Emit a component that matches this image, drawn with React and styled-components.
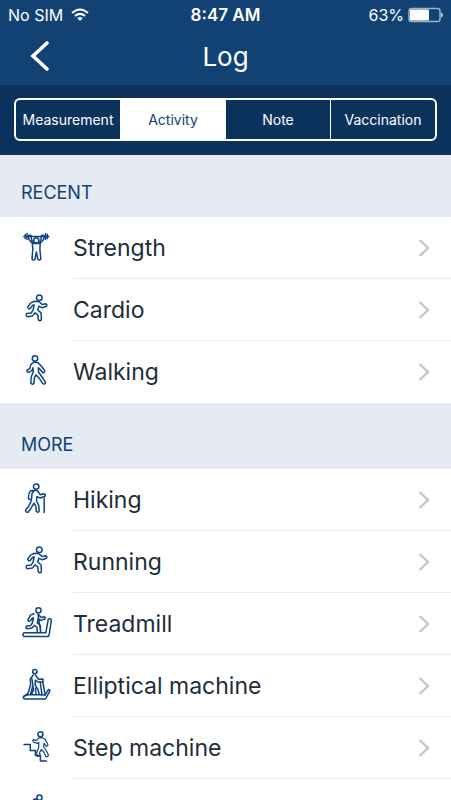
import styled, { createGlobalStyle } from "styled-components"

const GlobalStyle = createGlobalStyle`
    body {
        margin: 0;
        background-color: white;
        font-family: Inter, "Liberation Sans", sans-serif;
    }
    * {
        box-sizing: border-box;
    }
`
const Container = styled.div`
    height: 100vh;
    overflow: hidden;
    color: #1d2d3a;
`
const Header = styled.header`
    height: 85px;
    background-color: #114273;
    color: white;
`
const StatusBar = styled.div`
    display: grid;
    grid-template-columns: 1fr auto 1fr;
    align-items: center;
    height: 29px;
    padding: 0 8px;
    font-size: 16px;
`
const Status = styled.div`
    display: flex;
    align-items: center;
    justify-content: ${props => props.$end ? "flex-end" : "flex-start"};
    gap: ${props => props.$end ? "4px" : "8px"};
`
const Time = styled.div`
    font-size: 17px;
    font-weight: 600;
`
const NavBar = styled.div`
    display: grid;
    grid-template-columns: 64px 1fr 64px;
    align-items: center;
    height: 54px;
    padding: 0 8px;
`
const BackButton = styled.button`
    display: flex;
    justify-content: center;
    padding: 0;
    border: none;
    background: none;
    color: white;
    cursor: pointer;
`
const Title = styled.h1`
    margin: 0;
    font-size: 26px;
    font-weight: 400;
    text-align: center;
`
const Segments = styled.nav`
    padding: 13px 14px 14px;
    background-color: #0b335e;
`
const SegmentGroup = styled.div`
    display: flex;
    height: 43px;
    border: 2px solid white;
    border-radius: 6px;
    overflow: hidden;
`
const Segment = styled.button`
    flex: 1 1 0;
    min-width: 0;
    padding: 0;
    border: none;
    border-left: ${props => props.$first ? "none" : "1px solid white"};
    background-color: ${props => props.$active ? "white" : "transparent"};
    color: ${props => props.$active ? "#114273" : "white"};
    font-family: inherit;
    font-size: 14px;
    cursor: pointer;
`
const SectionTitle = styled.h2`
    display: flex;
    align-items: flex-end;
    height: ${props => props.$tall ? "66px" : "62px"};
    margin: 0;
    padding: 0 21px 13px;
    background-color: #e6ebf3;
    color: #114273;
    font-size: 18px;
    line-height: 22px;
    font-weight: 400;
`
const List = styled.ul`
    margin: 0;
    padding: 0;
    list-style: none;
`
const Row = styled.button`
    display: flex;
    width: 100%;
    height: 62px;
    padding: 0 0 0 20px;
    align-items: center;
    border: none;
    background-color: white;
    color: inherit;
    font-family: inherit;
    font-size: 23px;
    text-align: left;
    cursor: pointer;
`
const RowBody = styled.span`
    display: flex;
    flex: 1;
    align-items: center;
    justify-content: space-between;
    height: 100%;
    margin-left: 21px;
    padding-right: 20px;
    border-bottom: 1px solid ${props => props.$last ? "transparent" : "#e9ebee"};
`
const Glyph = styled.svg`
    flex: none;
    overflow: visible;
    fill: none;
    stroke: #0f4480;
    stroke-width: 1.5;
    stroke-linecap: round;
    stroke-linejoin: round;
`
const Chevron = styled.svg`
    flex: none;
    fill: none;
    stroke: #c3c5ca;
    stroke-width: 2.4;
`

const runner = (
  <g transform="translate(0.8 0)">
    <circle cx="18.5" cy="5.8" r="2.8" />
    <path d="M14 9.2 L10 10.9 L7 15 Q7.2 17.4 9.3 16.6 L11.9 13.3 L13.4 13 L12.2 18.4 L10.3 21 L6 21.6 Q4.4 23.4 6.4 24.7 L11.8 23.9 L14.2 20.9 L17 22.8 L17.5 27.7 Q19.1 29.7 20.6 27.7 L20.3 21 L17 18 L18 14.2 L21.3 15.8 L25.7 14.2 Q26.8 12.2 24.7 11.7 L21.5 12.6 L18 9.5 Z" />
  </g>
)

const icons = {
  strength: (
    <>
      <path d="M5.2 4.5 V8.5 M7 3.4 V9.6 M3.8 6.5 H28.8 M25.6 3.4 V9.6 M27.4 4.5 V8.5" />
      <circle cx="16.3" cy="10.3" r="2.6" />
      <path d="M8.8 5.2 Q7.3 8.8 12.3 13.2 L12.8 19 L12 29 Q13.5 30.8 15 29 L16.4 22 L17.8 29 Q19.3 30.8 20.8 29 L19.9 19 L20.2 13.2 Q25.3 8.8 23.8 5.2 L21.4 5.4 Q21.8 10 18.8 13.4 H13.8 Q10.7 10 11.2 5.4 Z" />
    </>
  ),
  running: runner,
  walking: (
    <>
      <circle cx="15" cy="4.4" r="2.7" />
      <path d="M14 8 L10.8 10.6 L9.7 14.6 L7.3 16 Q6.2 17.9 8.6 18.3 L11.8 16.7 L13 13.8 L13.2 18 L11.2 23 L10.8 29 Q12.4 31.2 14 29.2 L14.4 23.8 L16 20.8 L19.2 24.2 L22.7 29.6 Q25.2 30.8 25.5 28.2 L21.7 22.5 L18.6 18.2 L18.3 13.7 L20.5 15.8 L22.8 18.8 Q25.3 18.6 24.5 16.4 L21.9 12.8 L18 8.7 Z" />
    </>
  ),
  hiking: (
    <>
      <circle cx="16.2" cy="4.6" r="2.7" />
      <path d="M13 8.6 L10.7 8.8 Q8.1 11.4 8.5 17 L11.4 17.8 M14.3 8.3 L12 11.5 L11.4 18.5 L8.7 24.3 L5.5 28.3 Q5.5 30.6 8 30.2 L11.5 25.4 L14 21.2 L16 24.8 L16.2 29.3 Q17.8 31 19.1 29.2 L18.8 23.6 L16.5 19 L16.8 14.7 L20.3 16 L24.8 14.3 Q26.2 12.1 23.7 11.8 L20.3 12.8 L17.3 8.6 Z M24.2 16 V30.5" />
    </>
  ),
  treadmill: (
    <>
      <circle cx="18.5" cy="4.3" r="2.6" />
      <path d="M14 7.8 L10.5 9.1 L7.8 14.1 Q8.8 16.2 10.5 14.7 L12.5 12 L13.5 12 L12.3 17.2 L10.7 19.4 L6.6 19.9 Q5.2 21.5 6.8 22.7 L11.8 22.1 L14.3 19.4 L17 21.2 L17.3 26.5 M20.7 26.5 L20.3 19.4 L17.3 17 L18 12.7 L20.8 14.4 L24.8 13 Q26 11.2 23.9 10.8 L21.2 11.4 L18 8.1 Z" />
      <path d="M28.3 13.2 L25.8 26.8 H4 Q1.5 28.6 4 30.4 H27.5 Q29 30.4 29.2 28.4 L31.4 14.2 Q30 11.8 28.3 13.2 Z" />
    </>
  ),
  elliptical: (
    <>
      <circle cx="14.8" cy="3.6" r="2.2" />
      <path d="M13.3 7 L10.3 11 L10.6 17 L8 25.4 L4.5 28.2 M15.4 7 L18.4 11.2 L23 11 V13.8 L17.8 14 L15.3 12.2 L15.2 17.2 L18 21.4 L19.2 26.5 M13 17.2 L10.6 26 M15.5 20.2 L16 26 M20.2 13.8 L22 27 M22.8 13.8 L25.2 27 M12 11 L13.5 22 L11.8 26" />
      <path d="M8 26.8 H22.5 L25.2 27 L28.3 21.6 Q30 21.4 29.8 23.2 L25.5 31 H5 Q2 30.2 4 28 Z" />
    </>
  ),
  step: (
    <>
      <circle cx="20.4" cy="4.2" r="2.5" />
      <path d="M18.8 7.9 L16.5 10.6 L13.7 9.6 Q12 10.8 13.6 12.1 L17.4 13.5 L18.8 12.3 L18.7 17.4 L16.6 22.2 L17.3 26 Q19 27.2 20 25.3 L19.6 22.6 L21.3 19.5 L23.8 22 L25.6 26.2 Q27.8 27.5 28.4 25.1 L26.2 20.5 L23.6 17 L24 13.3 L26.2 16.3 Q28.2 16 27.8 14.2 L25 9.3 L22.8 7.9 Z" strokeWidth="1.2" />
      <path d="M4 14.6 H10.3 V20.4 H15.4 V25.6 H20.4 V31 H26.5" />
    </>
  ),
  cycling: (
    <>
      <circle cx="19.4" cy="5.6" r="2.6" />
      <path d="M16.5 7.5 L14.5 7 L10 11.5 Q8.5 13.5 10 15 L15 19 L14 25 M18 10 L14.5 13.5 L18 18 L16.5 25 M18 10 L21 14 H26" />
      <circle cx="8" cy="25" r="5" />
      <circle cx="24" cy="25" r="5" />
    </>
  ),
}

const segments = ["Measurement", "Activity", "Note", "Vaccination"]

const recent = [
  { label: "Strength", icon: "strength" },
  { label: "Cardio", icon: "running" },
  { label: "Walking", icon: "walking" },
]

const more = [
  { label: "Hiking", icon: "hiking" },
  { label: "Running", icon: "running" },
  { label: "Treadmill", icon: "treadmill" },
  { label: "Elliptical machine", icon: "elliptical" },
  { label: "Step machine", icon: "step" },
  { label: "Cycling", icon: "cycling" },
]

const WifiIcon = () => (
  <svg width="18" height="14" viewBox="0 0 18 14" fill="none" stroke="white" strokeWidth="2">
    <path d="M1 5 Q9 -2 17 5" />
    <path d="M4 8 Q9 3.8 14 8" />
    <path d="M6.2 10 Q9 7.8 11.8 10 L9 13 Z" fill="white" stroke="none" />
  </svg>
)

const BatteryIcon = () => (
  <svg width="35" height="16" viewBox="0 0 35 16">
    <rect x="1" y="1.5" width="31" height="13" rx="2.5" fill="none" stroke="#9eb3c9" strokeWidth="1.5" />
    <rect x="2" y="2.5" width="19" height="11" rx="1" fill="white" />
    <path d="M33 5.5 Q35 6 35 8 Q35 10 33 10.5 Z" fill="#b8c8d8" />
  </svg>
)

const ActivityList = ({ items }) => {
  return (
    <List>
      {items.map((item, i) => (
        <li key={item.label}>
          <Row type="button">
            <Glyph width="32" height="32" viewBox="0 2 32 32" aria-hidden="true">{icons[item.icon]}</Glyph>
            <RowBody $last={i === items.length - 1}>
              {item.label}
              <Chevron width="14" height="20" viewBox="0 0 14 20" aria-hidden="true">
                <path d="M2.5 2 L11 10 L2.5 18" />
              </Chevron>
            </RowBody>
          </Row>
        </li>
      ))}
    </List>
  )
}

const App = () => {
  return (
    <Container>
      <GlobalStyle />
      <Header>
        <StatusBar>
          <Status>No SIM <WifiIcon /></Status>
          <Time>8:47 AM</Time>
          <Status $end>63% <BatteryIcon /></Status>
        </StatusBar>
        <NavBar>
          <BackButton type="button" aria-label="Back">
            <svg width="20" height="32" viewBox="0 0 20 32" fill="none" stroke="white" strokeWidth="3.6" strokeLinecap="round">
              <path d="M17 3 L3 16 L17 29" />
            </svg>
          </BackButton>
          <Title>Log</Title>
        </NavBar>
      </Header>
      <Segments>
        <SegmentGroup>
          {segments.map((name, i) => (
            <Segment key={name} type="button" $first={i === 0} $active={name === "Activity"} aria-pressed={name === "Activity"}>
              {name}
            </Segment>
          ))}
        </SegmentGroup>
      </Segments>
      <SectionTitle>RECENT</SectionTitle>
      <ActivityList items={recent} />
      <SectionTitle $tall>MORE</SectionTitle>
      <ActivityList items={more} />
    </Container>
  )
}

export default App
